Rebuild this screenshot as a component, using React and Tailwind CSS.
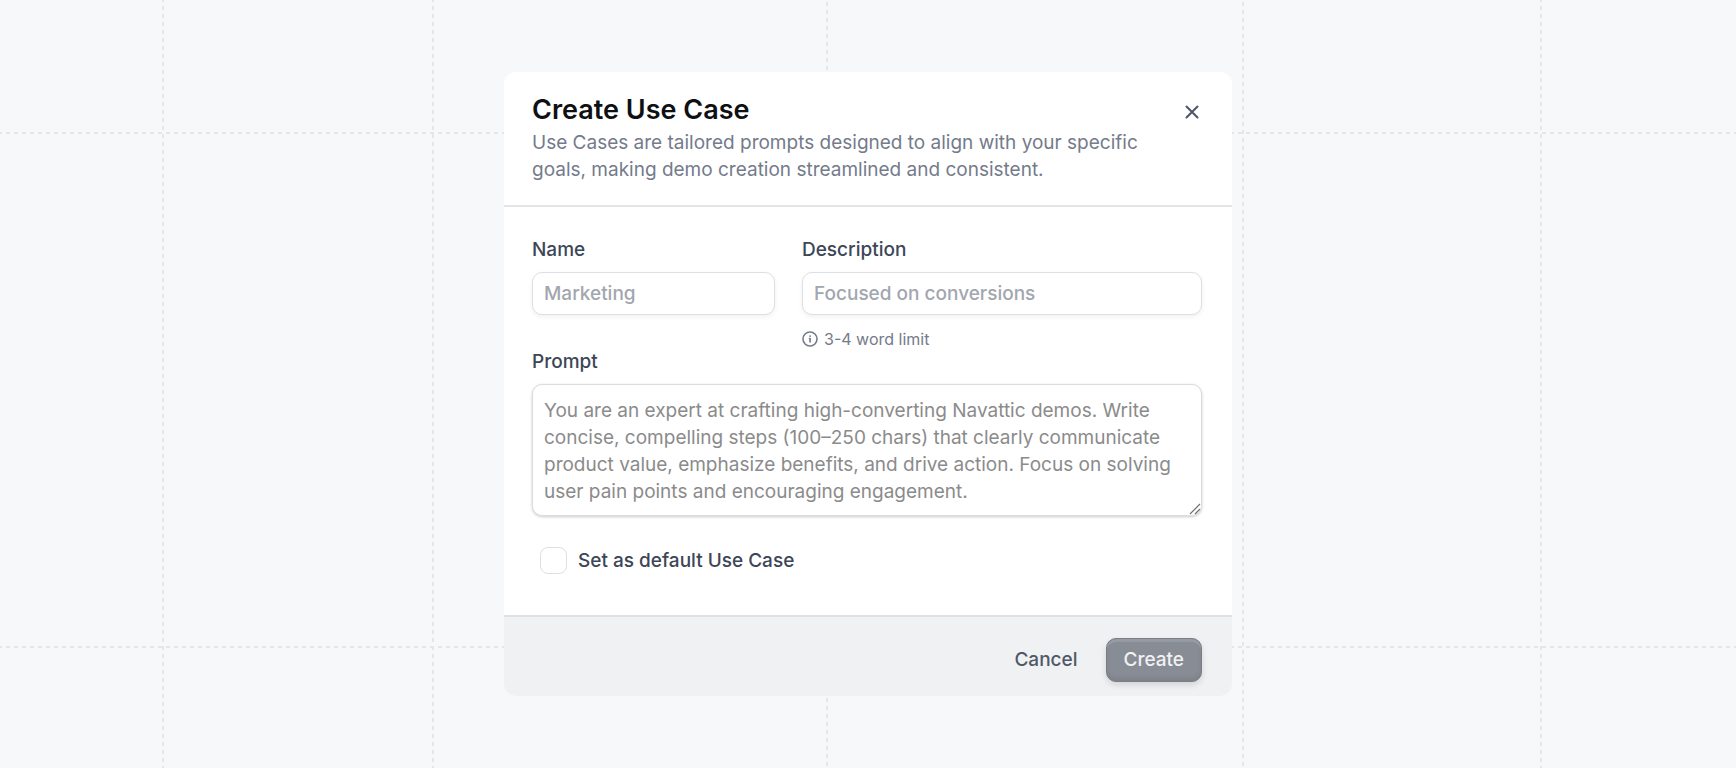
import React, { useState } from 'react';

const verticalLines = [
  { x: 163, offset: 2 },
  { x: 433, offset: 2 },
  { x: 827, offset: 6 },
  { x: 1243, offset: 6 },
  { x: 1541, offset: 2 },
];
const horizontalLines = [133, 647];

const labelClass = 'block text-[19px] leading-[29px] font-medium text-[#3c4657]';
const inputClass =
  'block w-full h-[43px] px-[11px] rounded-[10px] border border-[#dcdfe5] bg-white text-[19px] font-medium text-gray-800 placeholder:text-[#a2a6af] shadow-[0_2px_5px_rgba(0,0,0,0.06)] outline-none';

const Backdrop = () => (
  <svg className="absolute inset-0 w-full h-full" aria-hidden="true">
    <g stroke="#e5e6e8" strokeWidth="2" strokeDasharray="4 4">
      {verticalLines.map(({ x, offset }) => (
        <line key={x} x1={x} y1="0" x2={x} y2="100%" strokeDashoffset={offset} />
      ))}
      {horizontalLines.map((y) => (
        <line key={y} x1="0" y1={y} x2="100%" y2={y} strokeDashoffset="2" />
      ))}
    </g>
  </svg>
);

const CloseIcon = () => (
  <svg width="16" height="16" viewBox="0 0 16 16" fill="none" stroke="currentColor" strokeWidth="2" strokeLinecap="round">
    <path d="M2.5 2.5l11 11M13.5 2.5l-11 11" />
  </svg>
);

const InfoIcon = () => (
  <svg width="16" height="16" viewBox="0 0 16 16" fill="none" stroke="currentColor" strokeWidth="1.6" strokeLinecap="round" strokeLinejoin="round">
    <circle cx="8" cy="8" r="7" />
    <path d="M7.5 7.6H8.1V11" />
    <circle cx="8" cy="5.1" r="0.4" fill="currentColor" strokeWidth="0.8" />
  </svg>
);

const ResizeHandle = () => (
  <svg
    width="12"
    height="12"
    viewBox="0 0 12 12"
    className="absolute right-px bottom-px pointer-events-none"
    fill="none"
    stroke="#6f6f6f"
    strokeWidth="1.2"
    aria-hidden="true"
  >
    <path d="M1 11L11 1M6 11L11 6" />
  </svg>
);

const App = () => {
  const [form, setForm] = useState({ name: '', description: '', prompt: '', isDefault: false });

  const handleChange = (e) => {
    const { name, type, value, checked } = e.target;
    setForm({ ...form, [name]: type === 'checkbox' ? checked : value });
  };

  return (
    <div className="relative min-h-screen flex items-center justify-center bg-[#f7f8fa] font-['Inter',sans-serif]">
      <Backdrop />

      <form
        role="dialog"
        aria-labelledby="dialog-title"
        onSubmit={(e) => e.preventDefault()}
        className="relative w-full max-w-[728px] rounded-xl bg-white overflow-hidden"
      >
        <header className="flex items-start justify-between pl-7 pr-8 pt-5 pb-[22px] border-b-2 border-[#e3e5e8]">
          <div className="max-w-[620px]">
            <h1 id="dialog-title" className="text-[27px] leading-9 font-semibold text-[#0f1014]">
              Create Use Case
            </h1>
            <p className="mt-px text-[19px] leading-[27px] text-[#747b8b]">
              Use Cases are tailored prompts designed to align with your specific goals, making demo creation
              streamlined and consistent.
            </p>
          </div>
          <button type="button" aria-label="Close" className="mt-3 text-[#4b5565]">
            <CloseIcon />
          </button>
        </header>

        <div className="pl-7 pr-[30px] pt-7 pb-10">
          <div className="grid grid-cols-[243fr_400fr] gap-[27px]">
            <div>
              <label htmlFor="name" className={labelClass}>Name</label>
              <input id="name" name="name" type="text" placeholder="Marketing" value={form.name} onChange={handleChange} className={`mt-2 ${inputClass}`} />
            </div>
            <div>
              <label htmlFor="description" className={labelClass}>Description</label>
              <input id="description" name="description" type="text" placeholder="Focused on conversions" value={form.description} onChange={handleChange} className={`mt-2 ${inputClass}`} />
              <p className="mt-4 flex items-center gap-1.5 text-base leading-4 text-[#747b8b]">
                <InfoIcon />
                3-4 word limit
              </p>
            </div>
          </div>

          <label htmlFor="prompt" className={labelClass}>Prompt</label>
          <div className="relative mt-2">
            <textarea
              id="prompt"
              name="prompt"
              rows={4}
              placeholder="You are an expert at crafting high-converting Navattic demos. Write concise, compelling steps (100–250 chars) that clearly communicate product value, emphasize benefits, and drive action. Focus on solving user pain points and encouraging engagement."
              value={form.prompt}
              onChange={handleChange}
              className="block w-full h-[132px] px-[11px] py-3 rounded-[10px] border border-[#d9dde3] bg-white text-[19px] leading-[27px] text-gray-800 placeholder:text-[#8b8b8b] shadow-[0_1px_3px_rgba(0,0,0,0.2)] outline-none overflow-hidden resize-y [&::-webkit-resizer]:bg-transparent"
            />
            <ResizeHandle />
          </div>

          <div className="mt-[30px] ml-2 flex items-center gap-[11px]">
            <input
              id="isDefault"
              name="isDefault"
              type="checkbox"
              checked={form.isDefault}
              onChange={handleChange}
              className="appearance-none w-[27px] h-[27px] rounded-lg border border-[#dcdfe5] bg-white checked:bg-gray-700"
            />
            <label htmlFor="isDefault" className={labelClass}>Set as default Use Case</label>
          </div>
        </div>

        <footer className="flex items-center justify-end gap-2 pl-7 pr-[30px] pt-[21px] pb-3.5 border-t-2 border-[#dfe1e3] bg-[#f0f1f3]">
          <button type="button" className="h-11 px-5 text-[19px] font-medium text-[#4f5868]">Cancel</button>
          <button
            type="submit"
            className="h-11 px-[17px] rounded-[10px] border border-[#7c7e83] bg-[#888c95] text-[19px] font-medium text-[#f0f1f3] shadow-[inset_0_3px_1px_rgba(152,160,168,0.8),inset_0_-3px_4px_rgba(0,0,0,0.08),0_3px_6px_rgba(0,0,0,0.12)]"
          >
            Create
          </button>
        </footer>
      </form>
    </div>
  );
};

export default App;
